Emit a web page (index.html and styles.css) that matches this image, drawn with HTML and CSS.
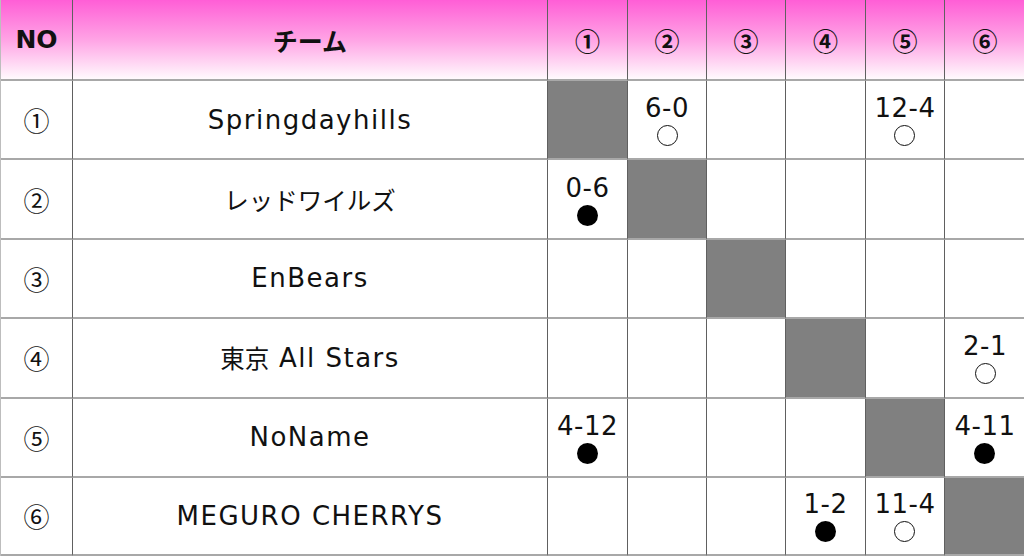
FILE: index.html
```html
<!DOCTYPE html>
<html lang="ja">
<head>
<meta charset="utf-8">
<title>対戦表</title>
<link rel="stylesheet" href="styles.css">
</head>
<body>
<div class="grid">
  <div class="cell head bold">NO</div>
  <div class="cell head bold jp">チーム</div>
  <div class="cell head bold jp">①</div>
  <div class="cell head bold jp">②</div>
  <div class="cell head bold jp">③</div>
  <div class="cell head bold jp">④</div>
  <div class="cell head bold jp">⑤</div>
  <div class="cell head bold jp">⑥</div>

  <div class="cell jp">①</div>
  <div class="cell name">Springdayhills</div>
  <div class="cell self"></div>
  <div class="cell"><div class="score"><span class="pts">6-0</span><span class="win"></span></div></div>
  <div class="cell"></div>
  <div class="cell"></div>
  <div class="cell"><div class="score"><span class="pts">12-4</span><span class="win"></span></div></div>
  <div class="cell"></div>

  <div class="cell jp">②</div>
  <div class="cell jp jpname">レッドワイルズ</div>
  <div class="cell"><div class="score"><span class="pts">0-6</span><span class="lose"></span></div></div>
  <div class="cell self"></div>
  <div class="cell"></div>
  <div class="cell"></div>
  <div class="cell"></div>
  <div class="cell"></div>

  <div class="cell jp">③</div>
  <div class="cell name">EnBears</div>
  <div class="cell"></div>
  <div class="cell"></div>
  <div class="cell self"></div>
  <div class="cell"></div>
  <div class="cell"></div>
  <div class="cell"></div>

  <div class="cell jp">④</div>
  <div class="cell name"><span class="jp jpname">東京</span>&nbsp;All Stars</div>
  <div class="cell"></div>
  <div class="cell"></div>
  <div class="cell"></div>
  <div class="cell self"></div>
  <div class="cell"></div>
  <div class="cell"><div class="score"><span class="pts">2-1</span><span class="win"></span></div></div>

  <div class="cell jp">⑤</div>
  <div class="cell name">NoName</div>
  <div class="cell"><div class="score"><span class="pts">4-12</span><span class="lose"></span></div></div>
  <div class="cell"></div>
  <div class="cell"></div>
  <div class="cell"></div>
  <div class="cell self"></div>
  <div class="cell"><div class="score"><span class="pts">4-11</span><span class="lose"></span></div></div>

  <div class="cell jp">⑥</div>
  <div class="cell name">MEGURO CHERRYS</div>
  <div class="cell"></div>
  <div class="cell"></div>
  <div class="cell"></div>
  <div class="cell"><div class="score"><span class="pts">1-2</span><span class="lose"></span></div></div>
  <div class="cell"><div class="score"><span class="pts">11-4</span><span class="win"></span></div></div>
  <div class="cell self"></div>
</div>
</body>
</html>
```

FILE: styles.css
```css
html, body {
  margin: 0;
  padding: 0;
  background: #ffffff;
}

body {
  font-family: "DejaVu Sans", "Noto Sans CJK JP", sans-serif;
  color: #111111;
  font-size: 26px;
}

.jp {
  font-family: "Noto Sans CJK JP", sans-serif;
}

.name {
  letter-spacing: 1.5px;
}

.jpname {
  font-size: 24.5px;
  letter-spacing: 0;
}

.grid {
  width: 1024px;
  height: 556px;
  box-sizing: border-box;
  border-left: 1px solid #bdbdbd;
  display: grid;
  grid-template-columns: 72px 475px 80px 79px 79px 80px 79px 80px;
  grid-template-rows: 81px repeat(5, 79.4px) 1fr;
}

.cell {
  display: flex;
  align-items: center;
  justify-content: center;
  border-right: 1px solid #606060;
  border-bottom: 2px solid #a8a8a8;
  min-width: 0;
  overflow: hidden;
  white-space: nowrap;
}

.cell:nth-child(8n) {
  border-right: none;
}

.head {
  background: linear-gradient(to bottom, #ff5ed6 0%, #ffa3e5 50%, #fffafd 100%);
  font-size: 25px;
}

.bold {
  font-weight: 700;
}

.self {
  background: #808080;
}

.score {
  display: flex;
  flex-direction: column;
  align-items: center;
  padding-top: 2px;
}

.pts {
  display: block;
  line-height: 26px;
  letter-spacing: 0.5px;
}

.win,
.lose {
  display: block;
  width: 21px;
  height: 21px;
  margin-top: 4px;
  border-radius: 50%;
  box-sizing: border-box;
}

.win {
  border: 1.5px solid #111111;
}

.lose {
  background: #000000;
}
```
